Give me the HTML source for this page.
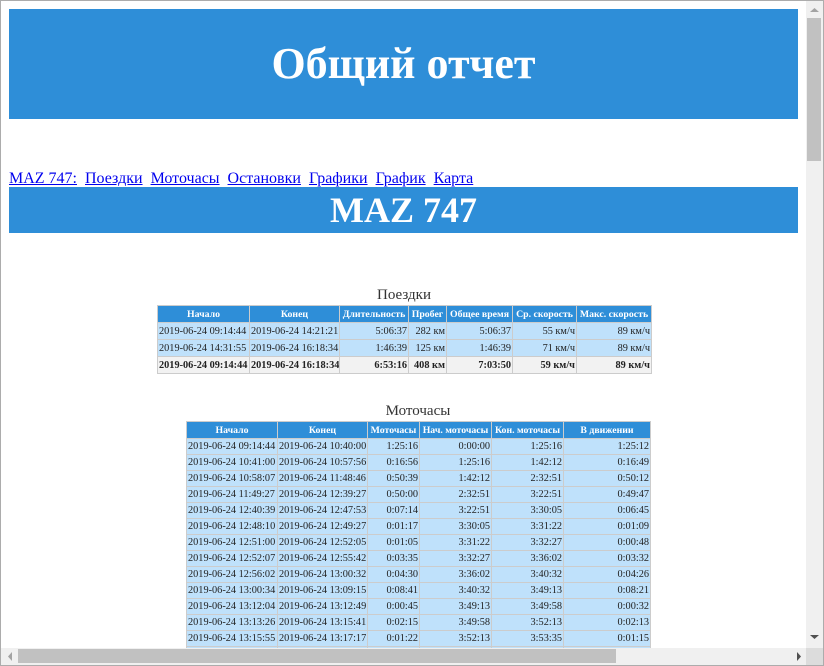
<!DOCTYPE html>
<html><head><meta charset="utf-8"><style>
*{box-sizing:border-box}
html,body{margin:0;padding:0;width:824px;height:666px;overflow:hidden;background:#fff}
#frame{position:absolute;left:0;top:0;width:824px;height:666px;border:1px solid #acacac;}
#view{position:absolute;left:1px;top:1px;width:805px;height:647px;overflow:hidden;font-family:"Liberation Serif",serif}
.h{position:absolute;left:8px;width:789px;background:#2e8ed8;color:#fff;text-align:center;font-weight:bold}
#nav{position:absolute;left:8px;top:169px;font-size:16px;white-space:nowrap}
#nav a{color:#00e;text-decoration:underline;margin-right:4px}
.cap{position:absolute;text-align:center;font-size:15px;color:#333}
table{position:absolute;border-collapse:collapse;table-layout:fixed;font-size:10.3px;color:#222}
td,th{border:1px solid #ccc;padding:0 1px;height:17px;white-space:nowrap;overflow:hidden}
th{background:#2e8ed8;color:#fff;font-size:9.8px;font-weight:bold;text-align:center;height:17px}
td{background:#bfe1fb;text-align:right}
td.l{text-align:left}
tr.t td{background:#f2f2f2;font-weight:bold}
#t2 td{height:16px}
#vs{position:absolute;left:806px;top:1px;width:17px;height:647px;background:#f0f0f0}
#hs{position:absolute;left:1px;top:648px;width:805px;height:17px;background:#f0f0f0}
#corner{position:absolute;left:806px;top:648px;width:17px;height:17px;background:#dcdcdc}
</style></head><body>
<div id="frame"></div>
<div id="view">
<div class="h" style="top:8px;height:110px;font-size:44px;line-height:110px">Общий отчет</div>
<div id="nav"><a>MAZ 747:</a> <a>Поездки</a> <a>Моточасы</a> <a>Остановки</a> <a>Графики</a> <a>График</a> <a>Карта</a></div>
<div class="h" style="top:186px;height:46px;font-size:36px;line-height:46px">MAZ 747</div>

<div class="cap" style="left:156px;width:494px;top:286px">Поездки</div>
<table style="left:156px;top:304px;width:494px">
<col style="width:92px"><col style="width:90px"><col style="width:69px"><col style="width:38px"><col style="width:66px"><col style="width:64px"><col style="width:75px">
<tr><th>Начало</th><th>Конец</th><th>Длительность</th><th>Пробег</th><th>Общее время</th><th>Ср. скорость</th><th>Макс. скорость</th></tr>
<tr><td class="l">2019-06-24 09:14:44</td><td class="l">2019-06-24 14:21:21</td><td>5:06:37</td><td>282 км</td><td>5:06:37</td><td>55 км/ч</td><td>89 км/ч</td></tr>
<tr><td class="l">2019-06-24 14:31:55</td><td class="l">2019-06-24 16:18:34</td><td>1:46:39</td><td>125 км</td><td>1:46:39</td><td>71 км/ч</td><td>89 км/ч</td></tr>
<tr class="t"><td class="l">2019-06-24 09:14:44</td><td class="l">2019-06-24 16:18:34</td><td>6:53:16</td><td>408 км</td><td>7:03:50</td><td>59 км/ч</td><td>89 км/ч</td></tr>
</table>

<div class="cap" style="left:185px;width:464px;top:402px">Моточасы</div>
<table id="t2" style="left:185px;top:420px;width:464px">
<col style="width:91px"><col style="width:90px"><col style="width:52px"><col style="width:72px"><col style="width:72px"><col style="width:87px">
<tr><th>Начало</th><th>Конец</th><th>Моточасы</th><th>Нач. моточасы</th><th>Кон. моточасы</th><th>В движении</th></tr>
<tr><td class="l">2019-06-24 09:14:44</td><td class="l">2019-06-24 10:40:00</td><td>1:25:16</td><td>0:00:00</td><td>1:25:16</td><td>1:25:12</td></tr>
<tr><td class="l">2019-06-24 10:41:00</td><td class="l">2019-06-24 10:57:56</td><td>0:16:56</td><td>1:25:16</td><td>1:42:12</td><td>0:16:49</td></tr>
<tr><td class="l">2019-06-24 10:58:07</td><td class="l">2019-06-24 11:48:46</td><td>0:50:39</td><td>1:42:12</td><td>2:32:51</td><td>0:50:12</td></tr>
<tr><td class="l">2019-06-24 11:49:27</td><td class="l">2019-06-24 12:39:27</td><td>0:50:00</td><td>2:32:51</td><td>3:22:51</td><td>0:49:47</td></tr>
<tr><td class="l">2019-06-24 12:40:39</td><td class="l">2019-06-24 12:47:53</td><td>0:07:14</td><td>3:22:51</td><td>3:30:05</td><td>0:06:45</td></tr>
<tr><td class="l">2019-06-24 12:48:10</td><td class="l">2019-06-24 12:49:27</td><td>0:01:17</td><td>3:30:05</td><td>3:31:22</td><td>0:01:09</td></tr>
<tr><td class="l">2019-06-24 12:51:00</td><td class="l">2019-06-24 12:52:05</td><td>0:01:05</td><td>3:31:22</td><td>3:32:27</td><td>0:00:48</td></tr>
<tr><td class="l">2019-06-24 12:52:07</td><td class="l">2019-06-24 12:55:42</td><td>0:03:35</td><td>3:32:27</td><td>3:36:02</td><td>0:03:32</td></tr>
<tr><td class="l">2019-06-24 12:56:02</td><td class="l">2019-06-24 13:00:32</td><td>0:04:30</td><td>3:36:02</td><td>3:40:32</td><td>0:04:26</td></tr>
<tr><td class="l">2019-06-24 13:00:34</td><td class="l">2019-06-24 13:09:15</td><td>0:08:41</td><td>3:40:32</td><td>3:49:13</td><td>0:08:21</td></tr>
<tr><td class="l">2019-06-24 13:12:04</td><td class="l">2019-06-24 13:12:49</td><td>0:00:45</td><td>3:49:13</td><td>3:49:58</td><td>0:00:32</td></tr>
<tr><td class="l">2019-06-24 13:13:26</td><td class="l">2019-06-24 13:15:41</td><td>0:02:15</td><td>3:49:58</td><td>3:52:13</td><td>0:02:13</td></tr>
<tr><td class="l">2019-06-24 13:15:55</td><td class="l">2019-06-24 13:17:17</td><td>0:01:22</td><td>3:52:13</td><td>3:53:35</td><td>0:01:15</td></tr>
<tr><td class="l">2019-06-24 13:17:30</td><td class="l">2019-06-24 13:20:00</td><td>0:02:30</td><td>3:53:35</td><td>3:56:05</td><td>0:02:20</td></tr>
</table>
</div>
<div id="vs">
<svg width="17" height="647" style="position:absolute;left:0;top:0">
<polygon points="4,11 13,11 8.5,7" fill="#a3a3a3"/>
<rect x="1" y="17" width="14" height="143" fill="#c1c1c1"/>
<polygon points="4,634 13,634 8.5,638" fill="#505050"/>
</svg></div>
<div id="hs">
<svg width="805" height="17" style="position:absolute;left:0;top:0">
<polygon points="7,8.5 11,4 11,13" fill="#a3a3a3"/>
<rect x="17" y="1" width="598" height="14" fill="#c1c1c1"/>
<polygon points="796,4 800,8.5 796,13" fill="#505050"/>
</svg></div>
<div id="corner"></div>
</body></html>
